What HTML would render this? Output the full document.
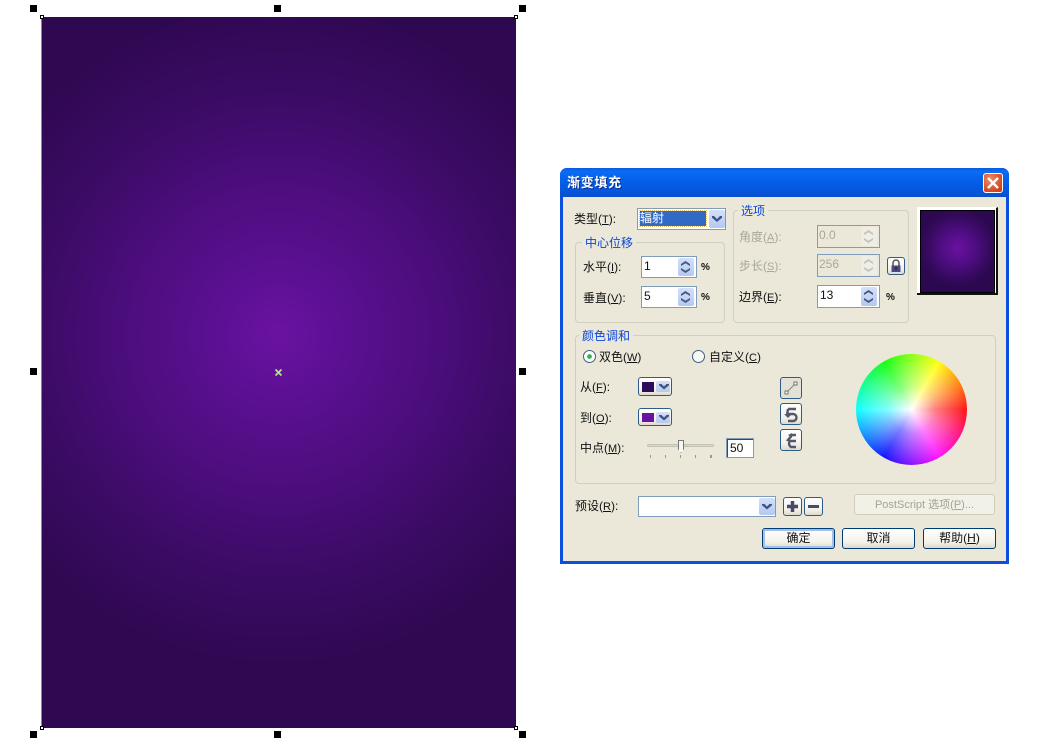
<!DOCTYPE html>
<html><head><meta charset="utf-8">
<style>
html,body{margin:0;padding:0;background:#fff;}
body{width:1048px;height:755px;position:relative;overflow:hidden;font-family:"Liberation Sans","Noto Sans CJK SC",sans-serif;font-size:12px;color:#111;}
div,span{position:absolute;box-sizing:border-box;white-space:nowrap;}
.h{width:7px;height:7px;background:#000;}
.c{width:4px;height:4px;background:#fff;border:1px solid #000;}
.t{line-height:14px;height:14px;}
.t u{text-decoration:underline;font-size:11px;}
.b{color:#0a46d8;background:#ebe8d9;padding:0 3px;line-height:14px;height:14px;}
.g{border:1px solid #d0d0bf;border-radius:4px;}
.d{color:#a9a799;}
.in{background:#fff;border:1px solid #7f9db9;}
.pc{font-weight:bold;font-size:10px;line-height:14px;height:14px;}
.spin{width:16px;background:linear-gradient(#d5e0fa,#b4c8f2);border-radius:2px;}
.spin.off{background:#eeeee6;}
.spin:before,.spin:after{content:"";position:absolute;left:3px;width:9px;height:5px;}
.spin:before{top:3px;background:#43587f;clip-path:polygon(50% 0,100% 60%,100% 100%,50% 45%,0 100%,0 60%);}
.spin:after{bottom:3px;background:#43587f;clip-path:polygon(0 0,50% 55%,100% 0,100% 40%,50% 100%,0 40%);}
.spin.off:before,.spin.off:after{background:#c4c4b8;}
.ar{width:16px;background:linear-gradient(#d5e0fa,#b4c8f2);border-radius:2px;}
.ar:after{content:"";position:absolute;left:3px;top:50%;margin-top:-3px;width:10px;height:6px;background:#3f5580;clip-path:polygon(0 0,20% 0,50% 50%,80% 0,100% 0,100% 30%,50% 100%,0 30%);}
.btn{border:1px solid #003c74;border-radius:3px;background:linear-gradient(#fff,#f3f2ea 70%,#dcd8ca);text-align:center;line-height:18px;}
.ib{border:1px solid #2f5b8a;border-radius:3px;background:linear-gradient(#fff,#f2f1e8 70%,#dedacc);}
</style></head><body>

<div style="left:41px;top:17px;width:475px;height:711px;background:radial-gradient(circle 330px at 237px 318px,#6a12a2 0%,#5b1092 20%,#4a0d7a 50%,#3a0b63 75%,#2f0852 100%);border-left:1px solid #8a8498;"></div>

<div class="h" style="left:30px;top:5px"></div><div class="h" style="left:274px;top:5px"></div><div class="h" style="left:519px;top:5px"></div>
<div class="h" style="left:30px;top:368px"></div><div class="h" style="left:519px;top:368px"></div>
<div class="h" style="left:30px;top:731px"></div><div class="h" style="left:274px;top:731px"></div><div class="h" style="left:519px;top:731px"></div>
<div class="c" style="left:40px;top:15px"></div><div class="c" style="left:514px;top:15px"></div><div class="c" style="left:40px;top:726px"></div><div class="c" style="left:514px;top:726px"></div>
<svg style="position:absolute;left:274px;top:368px" width="9" height="9"><path d="M1.500 1.500L7.500 7.500M7.500 1.500L1.500 7.500" stroke="#a8f060" stroke-width="1.800"/></svg>

<!-- dialog -->
<div style="left:560px;top:168px;width:449px;height:396px;background:#0a4fe0;border-radius:7px 7px 0 0;"></div>
<div style="left:560px;top:168px;width:449px;height:29px;border-radius:7px 7px 0 0;background:linear-gradient(#0a5ae0,#0a6cf4 12%,#0560e8 40%,#0458e0 75%,#0a50cc);"></div>
<div class="t" style="left:567px;top:176px;color:#fff;font-weight:bold;font-size:13px;letter-spacing:.7px;text-shadow:1px 1px 0 #0a2f90;">渐变填充</div>
<div style="left:983px;top:173px;width:20px;height:20px;border:1px solid #fff;border-radius:3px;background:radial-gradient(circle at 35% 30%,#ef8a66,#d8481f 70%,#c33a12);">
<svg style="position:absolute;left:2px;top:2px" width="14" height="14"><path d="M2 2L12 12M12 2L2 12" stroke="#fff" stroke-width="2.400"/></svg></div>
<div style="left:563px;top:197px;width:443px;height:364px;background:#ebe8d9;"></div>

<div class="t" style="left:574px;top:212px">类型(<u>T</u>):</div>
<div class="in" style="left:637px;top:208px;width:89px;height:22px;"></div>
<div style="left:640px;top:211px;width:66px;height:15px;background:#316ac5;outline:1px dotted #e8c060;color:#fff;line-height:15px;">辐射</div>
<div class="ar" style="left:709px;top:210px;height:18px"></div>

<div class="g" style="left:575px;top:242px;width:150px;height:81px"></div>
<div class="b" style="left:582px;top:236px">中心位移</div>
<div class="t" style="left:583px;top:260px">水平(<u>I</u>):</div>
<div class="in" style="left:641px;top:256px;width:56px;height:22px;padding:0 0 0 2px;line-height:18px;font-size:12px;">1</div>
<div class="spin" style="left:678px;top:258px;height:18px"></div>
<div class="pc" style="left:701px;top:261px;">%</div>
<div class="t" style="left:583px;top:291px">垂直(<u>V</u>):</div>
<div class="in" style="left:641px;top:286px;width:56px;height:22px;padding:0 0 0 2px;line-height:18px;font-size:12px;">5</div>
<div class="spin" style="left:678px;top:288px;height:18px"></div>
<div class="pc" style="left:701px;top:291px;">%</div>

<div class="g" style="left:733px;top:210px;width:176px;height:113px"></div>
<div class="b" style="left:738px;top:204px">选项</div>
<div class="t d" style="left:739px;top:230px">角度(<u>A</u>):</div>
<div class="t d" style="left:739px;top:259px">步长(<u>S</u>):</div>
<div class="t" style="left:739px;top:290px">边界(<u>E</u>):</div>
<div class="in d" style="left:817px;top:225px;width:63px;height:23px;background:#ebe8d9;padding-left:1px;line-height:19px;font-size:12px;">0.0</div>
<div class="spin off" style="left:861px;top:227px;height:19px"></div>
<div class="in d" style="left:817px;top:254px;width:63px;height:23px;background:#ebe8d9;padding-left:1px;line-height:19px;font-size:12px;">256</div>
<div class="spin off" style="left:861px;top:256px;height:19px"></div>
<div class="in" style="left:817px;top:285px;width:63px;height:23px;padding-left:2px;line-height:19px;font-size:12px;">13</div>
<div class="spin" style="left:861px;top:287px;height:19px"></div>
<div class="pc" style="left:886px;top:291px;">%</div>
<div class="ib" style="left:887px;top:257px;width:18px;height:18px;">
<svg style="position:absolute;left:2px;top:1px" width="12" height="14"><path d="M3 7V4a3 3 0 0 1 6 0V7" fill="none" stroke="#555" stroke-width="1.500"/><rect x="1.500" y="6.500" width="9" height="6.500" fill="#4a4a80"/><rect x="5.500" y="8" width="1" height="3" fill="#111"/></svg></div>

<div style="left:917px;top:207px;width:81px;height:88px;background:#fff;border-right:2px solid #111;border-bottom:2px solid #111;border-top:1px solid #fff;"></div>
<div style="left:920px;top:210px;width:75px;height:83px;border:1px solid #000;background:radial-gradient(circle 40px at 37px 37px,#6a12a2 0%,#4d0d80 45%,#340a5c 80%,#2c0850 100%);"></div>

<div class="g" style="left:575px;top:335px;width:421px;height:149px"></div>
<div class="b" style="left:579px;top:329px">颜色调和</div>
<div style="left:583px;top:350px;width:13px;height:13px;border:1px solid #3e5f7f;border-radius:50%;background:radial-gradient(circle,#2fb24a 0,#2fb24a 27%,#fff 33%);"></div>
<div class="t" style="left:599px;top:350px">双色(<u>W</u>)</div>
<div style="left:692px;top:350px;width:13px;height:13px;border:1px solid #3e5f7f;border-radius:50%;background:#f8f8f4;"></div>
<div class="t" style="left:709px;top:350px">自定义(<u>C</u>)</div>

<div class="t" style="left:580px;top:380px">从(<u>F</u>):</div>
<div class="ib" style="left:638px;top:377px;width:34px;height:19px;">
<div style="left:3px;top:4px;width:12px;height:10px;background:#2e0a5a"></div><div class="ar" style="left:17px;top:3px;height:11px;width:14px"></div></div>
<div class="t" style="left:580px;top:411px">到(<u>O</u>):</div>
<div class="ib" style="left:638px;top:408px;width:34px;height:18px;">
<div style="left:3px;top:4px;width:12px;height:9px;background:#6a12a2"></div><div class="ar" style="left:17px;top:3px;height:11px;width:14px"></div></div>
<div class="t" style="left:580px;top:441px">中点(<u>M</u>):</div>
<div style="left:647px;top:444px;width:67px;height:3px;background:#dbd8c8;border:1px solid #c4c2b2;border-radius:2px;"></div>
<div style="left:678px;top:440px;width:6px;height:13px;background:#f8f8f2;border:1px solid #777;clip-path:polygon(0 0,100% 0,100% 70%,50% 100%,0 70%);"></div>
<div style="left:650px;top:455px;width:1px;height:3px;background:#999"></div><div style="left:665px;top:455px;width:1px;height:3px;background:#999"></div><div style="left:680px;top:455px;width:1px;height:3px;background:#999"></div><div style="left:695px;top:455px;width:1px;height:3px;background:#999"></div><div style="left:710px;top:455px;width:2px;height:3px;background:#999"></div>
<div style="left:726px;top:438px;width:28px;height:20px;border:1px solid #7f9db9;background:#fff;box-shadow:inset 1px 1px 0 #444;padding-left:3px;line-height:19px;font-size:12px;">50</div>

<div class="ib" style="left:780px;top:377px;width:22px;height:22px;background:#e4e2d6;">
<svg style="position:absolute;left:3px;top:3px" width="14" height="14"><path d="M3 11L11 3" stroke="#888" stroke-width="1"/><rect x="1" y="10" width="3" height="3" fill="#fff" stroke="#555" stroke-width=".8"/><rect x="10" y="1" width="3" height="3" fill="#fff" stroke="#555" stroke-width=".8"/></svg></div>
<div class="ib" style="left:780px;top:403px;width:22px;height:22px;">
<svg style="position:absolute;left:2px;top:2px" width="17" height="17"><path d="M5 3H13M5 3L4 9M5 8H10A3.500 3.500 0 0 1 10 15H5" fill="none" stroke="#55586a" stroke-width="2.400"/><path d="M1 8L5 12L8 9Z" fill="#55586a"/></svg></div>
<div class="ib" style="left:780px;top:429px;width:22px;height:22px;">
<svg style="position:absolute;left:2px;top:2px" width="17" height="17"><path d="M13 3H9L5 8L8 9H13M7 9A4 4 0 0 0 8 15H13" fill="none" stroke="#55586a" stroke-width="2.400"/><path d="M9 1L9 6L5 3Z" fill="#55586a"/></svg></div>

<div style="left:856px;top:354px;width:111px;height:111px;border-radius:50%;background:radial-gradient(circle,#fff 0%,rgba(255,255,255,.5) 30%,rgba(255,255,255,0) 78%),conic-gradient(from 90deg,#f00,#f0f,#00f,#0ff,#0f0,#ff0,#f00);"></div>

<div class="t" style="left:575px;top:499px">预设(<u>R</u>):</div>
<div class="in" style="left:638px;top:496px;width:138px;height:21px;"></div>
<div class="ar" style="left:759px;top:498px;height:17px"></div>
<div class="ib" style="left:783px;top:497px;width:19px;height:19px;">
<svg style="position:absolute;left:2px;top:2px" width="13" height="13"><path d="M6.500 1V12M1 6.500H12" stroke="#484c68" stroke-width="3.500"/></svg></div>
<div class="ib" style="left:804px;top:497px;width:19px;height:19px;">
<svg style="position:absolute;left:2px;top:2px" width="13" height="13"><path d="M1 6.500H12" stroke="#484c68" stroke-width="3"/></svg></div>
<div style="left:854px;top:494px;width:141px;height:21px;border:1px solid #cfcdbd;border-radius:3px;background:#f2f1e8;color:#a5a396;text-align:center;line-height:19px;font-size:11px;padding-top:1px;">PostScript 选项(<u>P</u>)...</div>

<div class="btn" style="left:762px;top:528px;width:73px;height:21px;box-shadow:inset 0 0 0 2px #a5bfea;">确定</div>
<div class="btn" style="left:842px;top:528px;width:73px;height:21px;">取消</div>
<div class="btn" style="left:923px;top:528px;width:73px;height:21px;">帮助(<u>H</u>)</div>

</body></html>
